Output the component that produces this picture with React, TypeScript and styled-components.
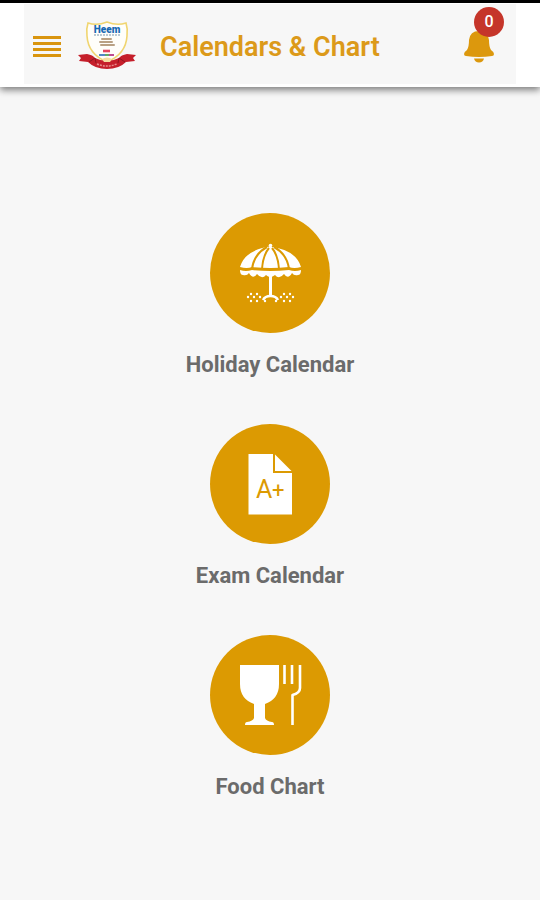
import React from "react";
import styled, { createGlobalStyle } from "styled-components";

const GlobalStyle = createGlobalStyle`
  * { box-sizing: border-box; }
  body {
    margin: 0;
    background: #f7f7f7;
    font-family: Roboto, "Liberation Sans", sans-serif;
  }
  button { font: inherit; border: 0; padding: 0; background: none; cursor: pointer; }
`;

const Page = styled.div`
  min-height: 100vh;
  display: flex;
  flex-direction: column;
  border-top: 3px solid #000;
`;

const Header = styled.header`
  padding: 1px 24px 3px;
  background: #fff;
  box-shadow: 0 3px 7px rgba(0, 0, 0, 0.5);
`;

const Toolbar = styled.div`
  display: flex;
  align-items: center;
  height: 80px;
  padding: 4px 20px 0 9px;
  background: #f7f7f7;
`;

const MenuButton = styled.button`
  display: flex;
  flex-direction: column;
  gap: 3px;
  width: 28px;
  margin-right: 16px;
`;

const MenuBar = styled.span`
  width: 28px;
  height: 3px;
  background: #d9950f;
`;

const Title = styled.h1`
  flex: 1;
  margin: 0 0 0 23px;
  padding-top: 2px;
  color: #dc9a1a;
  font-size: 27px;
  line-height: 32px;
  font-weight: 600;
`;

const BellButton = styled.button`
  position: relative;
  display: flex;
  width: 34px;
  height: 34px;
`;

const Badge = styled.span`
  position: absolute;
  top: -22px;
  right: -8px;
  width: 30px;
  height: 30px;
  border-radius: 50%;
  background: #c5352a;
  color: #fff;
  font-size: 16px;
  line-height: 30px;
  font-weight: 500;
  text-align: center;
`;

const Menu = styled.main`
  flex: 1;
  display: flex;
  flex-direction: column;
  align-items: center;
  gap: 44px;
  padding: 126px 16px 32px;
`;

const Tile = styled.button`
  display: flex;
  flex-direction: column;
  align-items: center;
  gap: 17px;
  color: #6b6b6b;
`;

const Disc = styled.span`
  display: block;
  width: 120px;
  height: 120px;
  border-radius: 50%;
  background: #dc9a02;
`;

const TileLabel = styled.span`
  font-size: 22px;
  line-height: 30px;
  font-weight: 700;
`;

const Crest = () => (
  <svg width="60" height="50" viewBox="0 0 60 50" role="img" aria-label="School crest">
    <path
      d="M11 2Q20 5 30 1Q40 5 49 2Q51 8 50 15Q49 33 30 41Q11 33 10 15Q9 8 11 2Z"
      fill="#fffefa"
      stroke="#f0d570"
      strokeWidth="1.6"
    />
    <text x="30" y="12" textAnchor="middle" fontSize="10" fontWeight="900" fill="#1769b3">
      Heem
    </text>
    <path d="M17 14H43" stroke="#7896ad" strokeWidth="1" strokeDasharray="2 1" />
    <path d="M25 18H34M23 21H35M24 24H37" stroke="#b9a184" strokeWidth="2" strokeLinecap="round" />
    <path d="M26 30H33" stroke="#e6445e" strokeWidth="2.6" />
    <path d="M22 34H28" stroke="#5687c4" strokeWidth="2" />
    <path d="M28 34H32" stroke="#65a865" strokeWidth="2" />
    <path d="M32 34H37" stroke="#c04c91" strokeWidth="2" />
    <path
      d="M1 34L10 33Q16 34 18 37Q30 43 42 37Q44 34 50 33L59 34L56 37L58 40L49 41Q42 48 30 48Q18 48 11 41L2 40L4 37Z"
      fill="#c51f2b"
    />
    <path d="M12 41L18 37L19 42M48 41L42 37L41 42" fill="none" stroke="#8d1720" strokeWidth="1" />
    <path d="M20 43Q30 47 40 43" fill="none" stroke="#e88d8d" strokeWidth="1.5" strokeDasharray="2 1" />
    <path d="M25 38Q30 35 35 38L33 41H27Z" fill="#f5dda0" />
  </svg>
);

const Bell = () => (
  <svg width="34" height="34" viewBox="0 0 34 34" aria-hidden="true">
    <path
      d="M17 2Q8 2 7 11Q7 18 5 21Q2 23 2 25Q2 27 4 27Q17 29 30 27Q32 27 32 25Q32 23 29 21Q27 18 27 11Q26 2 17 2Z"
      fill="#dc980d"
    />
    <path d="M12 29.5H22Q21 33.5 17 33.5Q13 33.5 12 29.5Z" fill="#dc980d" />
  </svg>
);

const sand = [
  [41, 81], [47, 81], [74, 81], [80, 81],
  [38, 84], [44, 84], [50, 84], [71, 84], [77, 84], [83, 84],
  [41, 88], [47, 88], [55, 88], [66, 88], [74, 88], [80, 88],
];

const Umbrella = () => (
  <svg width="120" height="120" viewBox="0 0 120 120" aria-hidden="true">
    <path d="M30 54Q35 37 60 33.5Q86 37 91 54Q84 56 79 54Q60 56 42 54Q37 56 30 54Z" fill="#fff" />
    <circle cx="60.5" cy="32.5" r="1.8" fill="#fff" />
    <path
      d="M57 34Q44 41 42 56M59 35Q53 42 52 56M62 35Q68 42 69 56M64 34Q77 41 79 56"
      fill="none"
      stroke="#dc9a02"
      strokeWidth="2"
    />
    <path
      d="M30 57Q36 59 42 57Q60 59 79 57Q85 59 91 57Q91 62 88 62Q84 63 82 60Q78 67 74 61Q69 67 65 62Q60 66 56 62Q52 67 47 61Q43 67 39 60Q37 63 33 62Q30 62 30 57Z"
      fill="#fff"
    />
    <path d="M60.5 60V84" fill="none" stroke="#fff" strokeWidth="3" />
    <path d="M53 87Q55 83 60.5 83Q66 83 68 87" fill="none" stroke="#fff" strokeWidth="2.4" />
    {sand.map(([x, y]) => (
      <circle key={`${x}-${y}`} cx={x} cy={y} r="1.2" fill="#fff" />
    ))}
  </svg>
);

const ExamSheet = () => (
  <svg width="120" height="120" viewBox="0 0 120 120" aria-hidden="true">
    <path d="M38.5 30H63V49H82V90.5H38.5Z" fill="#fff" />
    <path d="M65 30.5V47H81.5Z" fill="#fff" />
    <text x="46" y="74" fontSize="25" fontWeight="400" fill="#dc9a02">
      A
    </text>
    <text x="62" y="74" fontSize="22" fontWeight="400" fill="#dc9a02">
      +
    </text>
  </svg>
);

const Meal = () => (
  <svg width="120" height="120" viewBox="0 0 120 120" aria-hidden="true">
    <path
      d="M30 30H69V49Q69 64 55 69V83Q56 86 62 87Q64 87 64 90H35Q35 87 37 87Q43 86 44 83V69Q30 64 30 49Z"
      fill="#fff"
    />
    <path
      d="M74.5 30V49M82 30V49M90 30V53Q90 58 82.5 60V90"
      fill="none"
      stroke="#fff"
      strokeWidth="2.6"
      strokeLinejoin="round"
    />
  </svg>
);

const entries = [
  { label: "Holiday Calendar", Icon: Umbrella },
  { label: "Exam Calendar", Icon: ExamSheet },
  { label: "Food Chart", Icon: Meal },
];

export default function App() {
  return (
    <Page>
      <GlobalStyle />
      <Header>
        <Toolbar>
          <MenuButton type="button" aria-label="Open menu">
            <MenuBar />
            <MenuBar />
            <MenuBar />
            <MenuBar />
          </MenuButton>
          <Crest />
          <Title>Calendars &amp; Chart</Title>
          <BellButton type="button" aria-label="Notifications: 0">
            <Bell />
            <Badge>0</Badge>
          </BellButton>
        </Toolbar>
      </Header>
      <Menu>
        {entries.map(({ label, Icon }) => (
          <Tile type="button" key={label}>
            <Disc>
              <Icon />
            </Disc>
            <TileLabel>{label}</TileLabel>
          </Tile>
        ))}
      </Menu>
    </Page>
  );
}
